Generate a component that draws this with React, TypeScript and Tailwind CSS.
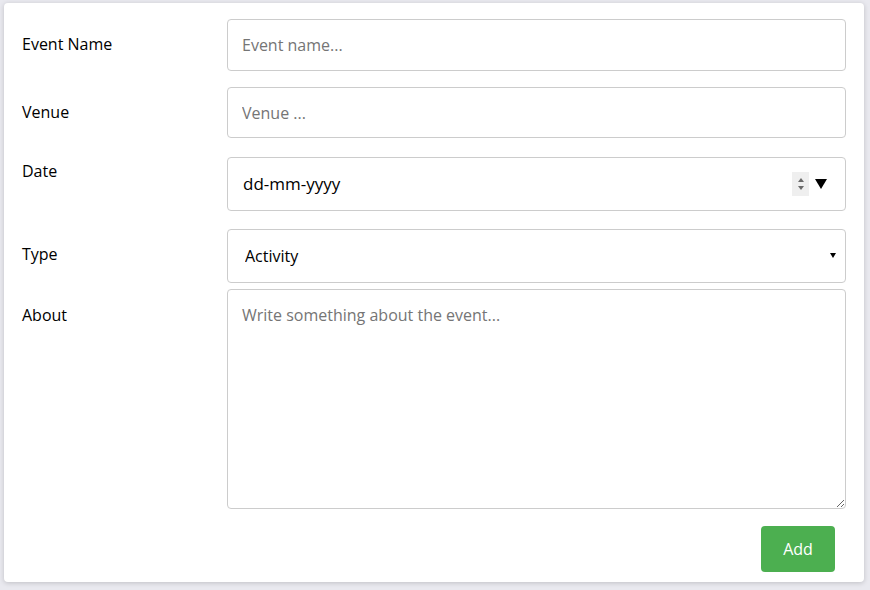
const labelCls = 'w-[205px] shrink-0 text-[16px] leading-6 text-black'
const boxCls =
  'flex-1 rounded-[4px] border border-[#cccccc] bg-white px-[14px] text-[16px] text-black outline-none placeholder:text-[#757575]'

export default function App() {
  return (
    <div className="min-h-[590px] bg-[#e9e9ef] pl-1 pr-[6px] pt-[3px] pb-2 font-['Open_Sans',sans-serif]">
      <form className="rounded-[4px] bg-white px-[18px] pt-4 pb-[10px] shadow-[0_1px_5px_rgba(0,0,0,0.18)]">
        {/* Event name */}
        <div className="flex items-start">
          <label className={`${labelCls} mt-[13px]`}>Event Name</label>
          <input className={`${boxCls} h-[52px]`} placeholder="Event name..." />
        </div>

        {/* Venue */}
        <div className="mt-4 flex items-start">
          <label className={`${labelCls} mt-[13px]`}>Venue</label>
          <input className={`${boxCls} h-[51px]`} placeholder="Venue ..." />
        </div>

        {/* Date (old chrome style, drawn by hand) */}
        <div className="mt-[19px] flex items-start">
          <label className={`${labelCls} mt-[2px]`}>Date</label>
          <div className={`${boxCls} flex h-[54px] items-center pr-[18px]`}>
            <span className="flex-1 pl-px text-[17px]">dd-mm-yyyy</span>
            <span className="flex h-6 w-[17px] flex-col items-center justify-center gap-[4px] bg-[#efefef]">
              <span className="h-0 w-0 border-x-[3px] border-b-[4px] border-x-transparent border-b-[#6b6b6b]" />
              <span className="h-0 w-0 border-x-[3px] border-t-[4px] border-x-transparent border-t-[#6b6b6b]" />
            </span>
            <span className="ml-[6px] h-0 w-0 border-x-[6px] border-t-[10px] border-x-transparent border-t-black" />
          </div>
        </div>

        {/* Type */}
        <div className="mt-[18px] flex items-start">
          <label className={`${labelCls} mt-[13px]`}>Type</label>
          <div className="relative flex flex-1">
            <select
              defaultValue="Activity"
              className={`${boxCls} h-[54px] appearance-none pl-[17px]`}
            >
              <option>Activity</option>
              <option>Meeting</option>
              <option>Workshop</option>
            </select>
            <span className="pointer-events-none absolute right-[10px] top-[24px] h-0 w-0 border-x-[3px] border-t-[5px] border-x-transparent border-t-black" />
          </div>
        </div>

        {/* About */}
        <div className="mt-[6px] flex items-start">
          <label className={`${labelCls} mt-[14px]`}>About</label>
          <textarea
            className={`${boxCls} h-[220px] py-[13px] leading-6`}
            placeholder="Write something about the event..."
          />
        </div>

        <div className="mt-[17px] flex justify-end pr-[11px]">
          <button
            type="button"
            className="h-[46px] w-[74px] rounded-[4px] bg-[#4caf50] text-[16px] text-white"
          >
            Add
          </button>
        </div>
      </form>
    </div>
  )
}
